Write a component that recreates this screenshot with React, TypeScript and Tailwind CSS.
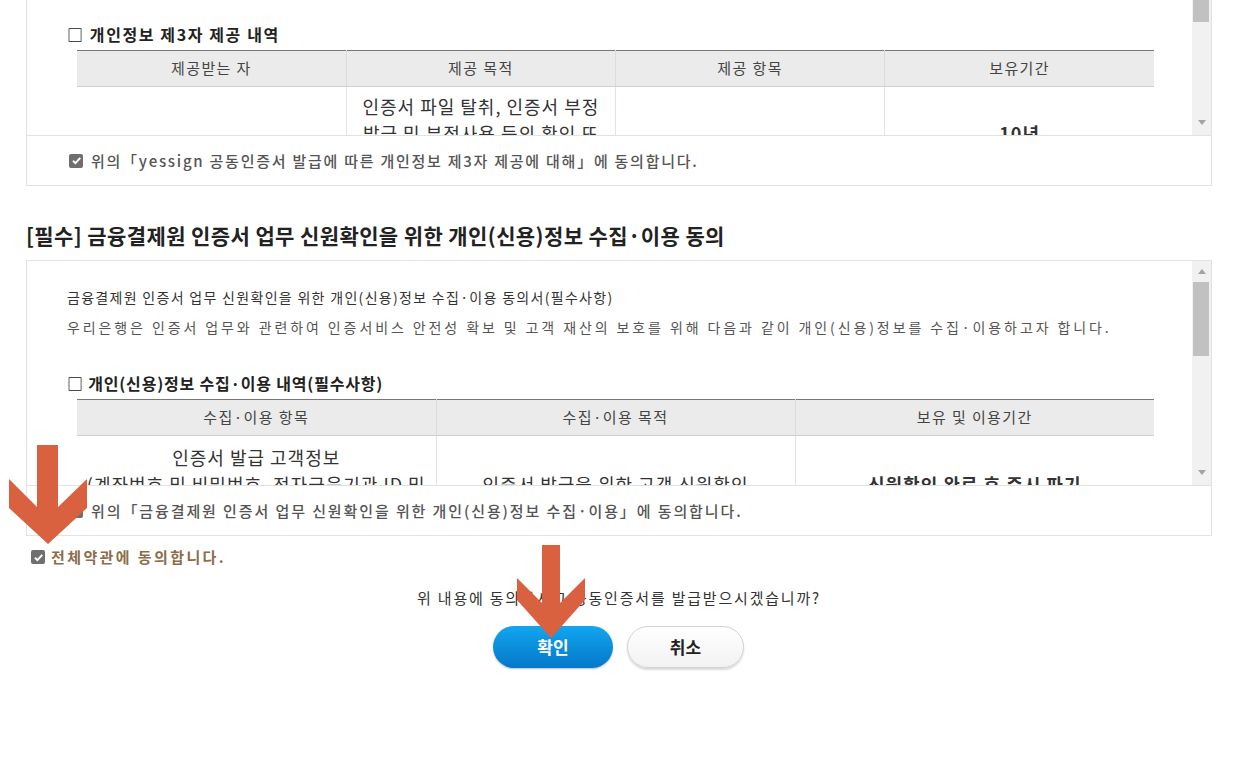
import React from 'react';

const FONT = "font-['Noto_Sans_CJK_KR','Malgun_Gothic',sans-serif]";

function CheckedBox({ size = 13 }: { size?: number }) {
    return (
        <span
            className="inline-flex items-center justify-center shrink-0 rounded-[2px] bg-[#6f6f6f]"
            style={{ width: size, height: size }}
        >
            <svg width={size - 3} height={size - 3} viewBox="0 0 10 10">
                <path d="M1.8 5.2 L4 7.4 L8.4 2.6" fill="none" stroke="#fff" strokeWidth="1.8" />
            </svg>
        </span>
    );
}

function ArrowBtn({ dir, className }: { dir: 'up' | 'down'; className: string }) {
    return (
        <div className={`flex items-center justify-center ${className}`}>
            <svg width="8" height="5" viewBox="0 0 8 5">
                {dir === 'up' ? (
                    <polygon points="0,5 8,5 4,0" fill="#a3a3a3" />
                ) : (
                    <polygon points="0,0 8,0 4,5" fill="#a3a3a3" />
                )}
            </svg>
        </div>
    );
}

function ScrollBar({ top }: { top: boolean }) {
    return (
        <div className="w-[19px] shrink-0 bg-[#f1f1f1] flex flex-col">
            {top ? (
                <>
                    <ArrowBtn dir="up" className="h-[20px]" />
                    <div className="mt-[1px] ml-[1px] w-[16px] h-[74px] bg-[#c1c1c1]" />
                </>
            ) : (
                <div className="ml-[1px] w-[16px] h-[22px] bg-[#c1c1c1]" />
            )}
            <div className="flex-1" />
            <ArrowBtn dir="down" className="h-[22px] mb-[2px]" />
        </div>
    );
}

function AgreeRow({ children, wide }: { children: React.ReactNode; wide?: boolean }) {
    return (
        <div className="h-[50px] border-t border-[#e2e2e2] flex items-center pl-[42px] gap-[8px]">
            <CheckedBox size={14} />
            <span
                className={`text-[15px] leading-[20px] font-medium text-[#555] ${wide ? 'tracking-[1.9px]' : 'tracking-[1.75px]'}`}
            >
                {children}
            </span>
        </div>
    );
}

const th = 'h-[36px] font-normal text-[15px] tracking-[1.4px] text-[#444] bg-[#ebebeb] border-b border-[#cfcfcf] border-l border-l-[#dcdcdc] first:border-l-0';
const td = 'align-middle text-center text-[18px] leading-[27px] tracking-[1px] text-[#333] border-l border-[#e3e3e3] first:border-l-0';

function ThirdPartyTable() {
    return (
        <table className="ml-[10px] w-[1077px] table-fixed border-collapse border-t border-[#777]">
            <thead>
                <tr>
                    <th className={th}>제공받는 자</th>
                    <th className={th}>제공 목적</th>
                    <th className={th}>제공 항목</th>
                    <th className={th}>보유기간</th>
                </tr>
            </thead>
            <tbody>
                <tr>
                    <td className={`${td} py-[6px]`}></td>
                    <td className={`${td} py-[6px]`}>
                        인증서 파일 탈취, 인증서 부정
                        <br />
                        발급 및 부정사용 등의 확인 또
                        <br />는 조사
                    </td>
                    <td className={`${td} py-[6px]`}></td>
                    <td className={`${td} py-[6px] font-bold text-[#111]`}>10년</td>
                </tr>
            </tbody>
        </table>
    );
}

function CreditTable() {
    return (
        <table className="ml-[10px] w-[1077px] table-fixed border-collapse border-t border-[#777]">
            <thead>
                <tr>
                    <th className={th}>수집·이용 항목</th>
                    <th className={th}>수집·이용 목적</th>
                    <th className={th}>보유 및 이용기간</th>
                </tr>
            </thead>
            <tbody>
                <tr>
                    <td className={`${td} py-[8px]`}>
                        인증서 발급 고객정보
                        <br />
                        (계좌번호 및 비밀번호, 전자금융기관 ID 및
                        <br />
                        인증서 비밀번호 등)
                    </td>
                    <td className={`${td} py-[8px]`}>인증서 발급을 위한 고객 신원확인</td>
                    <td className={`${td} py-[8px] font-bold text-[#111]`}>신원확인 완료 후 즉시 파기</td>
                </tr>
            </tbody>
        </table>
    );
}

function DownArrow({ className, points, w, h }: { className: string; points: string; w: number; h: number }) {
    return (
        <svg className={`absolute ${className}`} width={w} height={h} viewBox={`0 0 ${w} ${h}`}>
            <polygon points={points} fill="#d9613f" />
        </svg>
    );
}

export default function App() {
    return (
        <div className={`relative w-full h-[761px] overflow-hidden bg-white ${FONT}`}>
            <div className="pl-[26px] pr-[27px]">
                {/* 제3자 제공 동의 박스 (위쪽은 스크롤되어 잘림) */}
                <div className="border-x border-b border-[#e2e2e2]">
                    <div className="h-[135px] flex">
                        <div className="flex-1 overflow-hidden pt-[24px] pl-[40px]">
                            <p className="text-[16px] leading-[20px] font-bold text-[#222] tracking-[1.6px]">□ 개인정보 제3자 제공 내역</p>
                            <div className="mt-[6px]">
                                <ThirdPartyTable />
                            </div>
                        </div>
                        <ScrollBar top={false} />
                    </div>
                    <AgreeRow>위의「yessign 공동인증서 발급에 따른 개인정보 제3자 제공에 대해」에 동의합니다.</AgreeRow>
                </div>

                <h2 className="mt-[35px] text-[21px] leading-[28px] font-bold text-[#222] tracking-[0.4px]">
                    [필수] 금융결제원 인증서 업무 신원확인을 위한 개인(신용)정보 수집·이용 동의
                </h2>

                <div className="mt-[11px] border border-[#e2e2e2]">
                    <div className="h-[224px] flex">
                        <div className="flex-1 overflow-hidden pt-[21px] pl-[40px]">
                            <p className="text-[14px] leading-[30px] text-[#333] tracking-[1.3px]">
                                금융결제원 인증서 업무 신원확인을 위한 개인(신용)정보 수집·이용 동의서(필수사항)
                            </p>
                            <p className="text-[14px] leading-[30px] text-[#555] tracking-[2.9px]">
                                우리은행은 인증서 업무와 관련하여 인증서비스 안전성 확보 및 고객 재산의 보호를 위해 다음과 같이 개인(신용)정보를 수집·이용하고자 합니다.
                            </p>
                            <p className="mt-[31px] text-[16px] leading-[20px] font-bold text-[#222] tracking-[0.8px]">
                                □ 개인(신용)정보 수집·이용 내역(필수사항)
                            </p>
                            <div className="mt-[6px]">
                                <CreditTable />
                            </div>
                        </div>
                        <ScrollBar top={true} />
                    </div>
                    <AgreeRow wide>위의「금융결제원 인증서 업무 신원확인을 위한 개인(신용)정보 수집·이용」에 동의합니다.</AgreeRow>
                </div>

                <div className="mt-[10px] pl-[5px] h-[22px] flex items-center gap-[6px]">
                    <CheckedBox size={14} />
                    <span className="text-[15px] leading-[22px] font-bold text-[#8c6d4b] tracking-[2.4px]">전체약관에 동의합니다.</span>
                </div>

                <p className="mt-[19px] text-center text-[15px] leading-[22px] text-[#333] tracking-[1.8px]">
                    위 내용에 동의하시고 공동인증서를 발급받으시겠습니까?
                </p>

                <div className="mt-[17px] flex justify-center gap-[14px] pr-[1px]">
                    <button className="w-[120px] h-[42px] rounded-full bg-gradient-to-b from-[#12a6ee] to-[#0678cb] text-white text-[17px] font-bold shadow-[0_1px_2px_rgba(0,0,0,0.25)]">
                        확인
                    </button>
                    <button className="w-[117px] h-[42px] rounded-full bg-gradient-to-b from-white to-[#f2f2f2] border border-[#d2d2d2] text-[#222] text-[17px] font-bold shadow-[0_2px_2px_rgba(0,0,0,0.15)]">
                        취소
                    </button>
                </div>
            </div>

            {/* 안내용 화살표 */}
            <DownArrow
                className="left-[8px] top-[445px]"
                w={82}
                h={100}
                points="29,0 50,0 50,62 79,34 79,63 40,99 1,63 1,34 29,62"
            />
            <DownArrow
                className="left-[513px] top-[545px]"
                w={77}
                h={95}
                points="29,0 47,0 47,58 72,33 72,55 38,93 4,55 4,33 29,58"
            />
        </div>
    );
}
